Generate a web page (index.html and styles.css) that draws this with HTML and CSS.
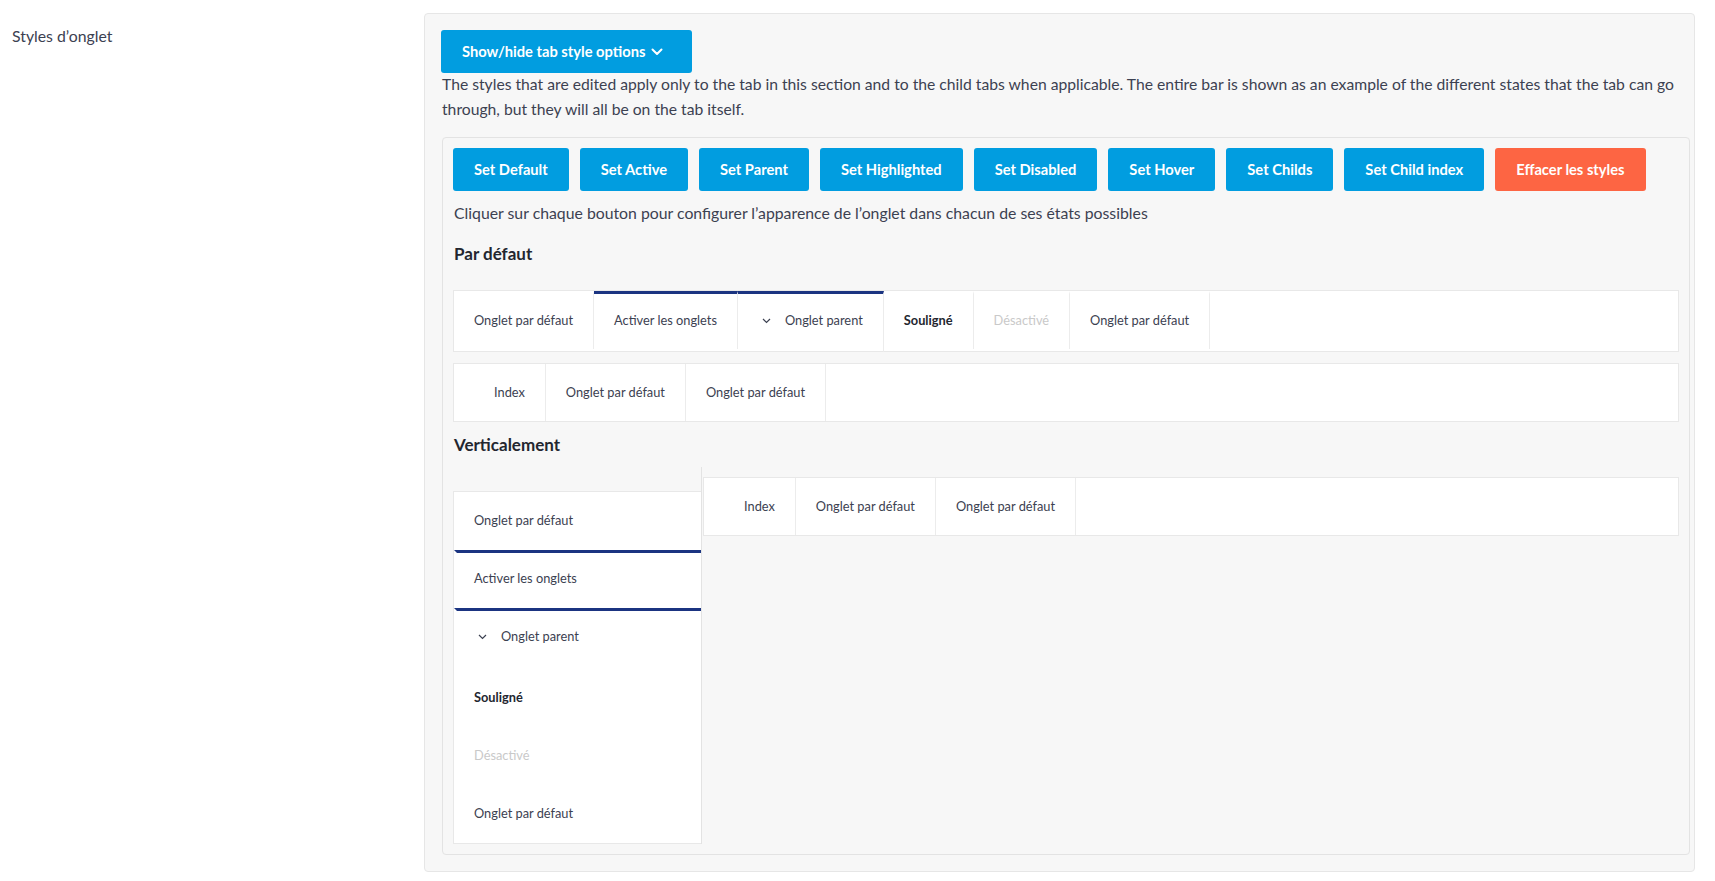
FILE: index.html
```html
<!DOCTYPE html>
<html lang="fr">
	<head>
		<meta charset="utf-8">
		<title>Styles d’onglet</title>
		<link rel="stylesheet" href="styles.css">
	</head>
	<body>
		<div class="field">
			<div class="field-label">Styles d’onglet</div>
			<div class="panel">
				<button type="button" class="toggle">
					Show/hide tab style options
					<svg width="12" height="8" viewBox="0 0 12 8"><polyline points="1.5,1.5 6,6 10.5,1.5" fill="none" stroke="#fff" stroke-width="2" stroke-linecap="round" stroke-linejoin="round"/></svg>
				</button>
				<p class="intro">The styles that are edited apply only to the tab in this section and to the child tabs when applicable. The entire bar is shown as an example of the different states that the tab can go through, but they will all be on the tab itself.</p>

				<div class="editor">
					<div class="actions">
						<button type="button" class="btn">Set Default</button>
						<button type="button" class="btn">Set Active</button>
						<button type="button" class="btn">Set Parent</button>
						<button type="button" class="btn">Set Highlighted</button>
						<button type="button" class="btn">Set Disabled</button>
						<button type="button" class="btn">Set Hover</button>
						<button type="button" class="btn">Set Childs</button>
						<button type="button" class="btn">Set Child index</button>
						<button type="button" class="btn btn-reset">Effacer les styles</button>
					</div>
					<p class="hint">Cliquer sur chaque bouton pour configurer l’apparence de l’onglet dans chacun de ses états possibles</p>

					<h3>Par défaut</h3>
					<div class="tabs main-tabs">
						<div class="tab">Onglet par défaut</div>
						<div class="tab active">Activer les onglets</div>
						<div class="tab active parent">
							<svg class="caret" width="9" height="6" viewBox="0 0 9 6"><polyline points="1,1 4.5,4.5 8,1" fill="none" stroke="#3c4151" stroke-width="1.2"/></svg>
							Onglet parent
						</div>
						<div class="tab underline">Souligné</div>
						<div class="tab disabled">Désactivé</div>
						<div class="tab">Onglet par défaut</div>
					</div>
					<div class="tabs child-tabs">
						<div class="tab index">Index</div>
						<div class="tab">Onglet par défaut</div>
						<div class="tab">Onglet par défaut</div>
					</div>

					<h3 class="vertical-title">Verticalement</h3>
					<div class="vertical">
						<div class="vertical-side">
							<div class="vtabs">
								<div class="vtab">Onglet par défaut</div>
								<div class="vtab active">Activer les onglets</div>
								<div class="vtab active parent">
									<svg class="caret" width="9" height="6" viewBox="0 0 9 6"><polyline points="1,1 4.5,4.5 8,1" fill="none" stroke="#3c4151" stroke-width="1.2"/></svg>
									Onglet parent
								</div>
								<div class="vtab underline">Souligné</div>
								<div class="vtab disabled">Désactivé</div>
								<div class="vtab">Onglet par défaut</div>
							</div>
						</div>
						<div class="vertical-children">
							<div class="tabs child-tabs">
								<div class="tab index">Index</div>
								<div class="tab">Onglet par défaut</div>
								<div class="tab">Onglet par défaut</div>
							</div>
						</div>
					</div>
				</div>
			</div>
		</div>
	</body>
</html>
```

FILE: styles.css
```css
html,
body {
	margin: 0;
	background-color: #fff;
	font-family: Lato, "Open Sans", sans-serif;
	color: #3c4151;
}
.field {
	display: grid;
	grid-template-columns: 412px 1fr;
	padding: 13px 20px 8px 12px;
}
.field-label {
	font-size: 15.8px;
	line-height: 22px;
	padding-top: 12px;
}
.panel {
	background-color: #f7f7f7;
	border: 1px solid #e6e6e6;
	border-radius: 4px;
	padding: 16px 4px 16px 16px;
}
button {
	font-family: Lato, "Open Sans", sans-serif;
	cursor: pointer;
}
.toggle {
	display: inline-flex;
	align-items: center;
	gap: 6px;
	border: 0;
	border-radius: 3px;
	background-color: #019de0;
	color: #fff;
	font-size: 14.7px;
	font-weight: bold;
	line-height: 19px;
	padding: 12px 29px 12px 21px;
}
.intro {
	margin: -1px 0 15px 1px;
	font-size: 15.7px;
	line-height: 25px;
}
.editor {
	margin-left: 1px;
	background-color: #f7f7f7;
	border: 1px solid #e3e3e3;
	border-radius: 4px;
	padding: 10px;
}
.actions {
	display: flex;
	flex-wrap: wrap;
	gap: 11px;
}
.btn {
	border: 0;
	border-radius: 3px;
	background-color: #019de0;
	color: #fff;
	font-size: 14.7px;
	font-weight: bold;
	line-height: 19px;
	padding: 12px 21px;
}
.btn-reset {
	background-color: #fd6543;
}
.hint {
	margin: 11px 0 0 1px;
	font-size: 15.8px;
	line-height: 22px;
}
h3 {
	margin: 18px 0 24px 1px;
	font-size: 17px;
	line-height: 24px;
	color: #23262f;
}
.tabs {
	display: flex;
	background-color: #fff;
	border: 1px solid #e8e8e8;
	font-size: 12.8px;
	line-height: 19px;
}
.tab {
	display: flex;
	align-items: center;
	gap: 14px;
	padding: 19px 20px;
	border-right: 1px solid #ececec;
}
.main-tabs .tab {
	border-top: 3px solid transparent;
	margin-bottom: 2px;
	padding-top: 17px;
	padding-bottom: 19px;
}
.main-tabs .tab.active {
	border-top-color: #1b3481;
}
.main-tabs .tab.parent {
	margin-bottom: -1px;
	padding-bottom: 22px;
	padding-left: 24px;
}
.tab.index {
	padding-left: 40px;
}
.underline {
	font-weight: bold;
	color: #23262f;
}
.disabled {
	color: #c9c9c9;
}
.child-tabs {
	margin-top: 11px;
}
.vertical-title {
	margin: 11px 0 10px 1px;
}
.vertical {
	display: flex;
}
.vertical-side {
	width: 248px;
	padding-top: 24px;
}
.vtabs {
	background-color: #fff;
	border: 1px solid #e8e8e8;
	border-right: 0;
	font-size: 12.8px;
	line-height: 19px;
}
.vtab {
	display: flex;
	align-items: center;
	gap: 14px;
	padding: 16px 20px 20px 17px;
	border-top: 3px solid #fff;
	border-left: 3px solid #fff;
}
.vtab.active {
	border-top-color: #1b3481;
}
.vtab.parent {
	padding-left: 21px;
	padding-bottom: 23px;
}
.vertical-children {
	flex: 1;
	border-left: 1px solid #e3e3e3;
	padding: 10px 0 0 1px;
}
.vertical-children .child-tabs {
	margin-top: 0;
}
.caret {
	flex: none;
}
```
